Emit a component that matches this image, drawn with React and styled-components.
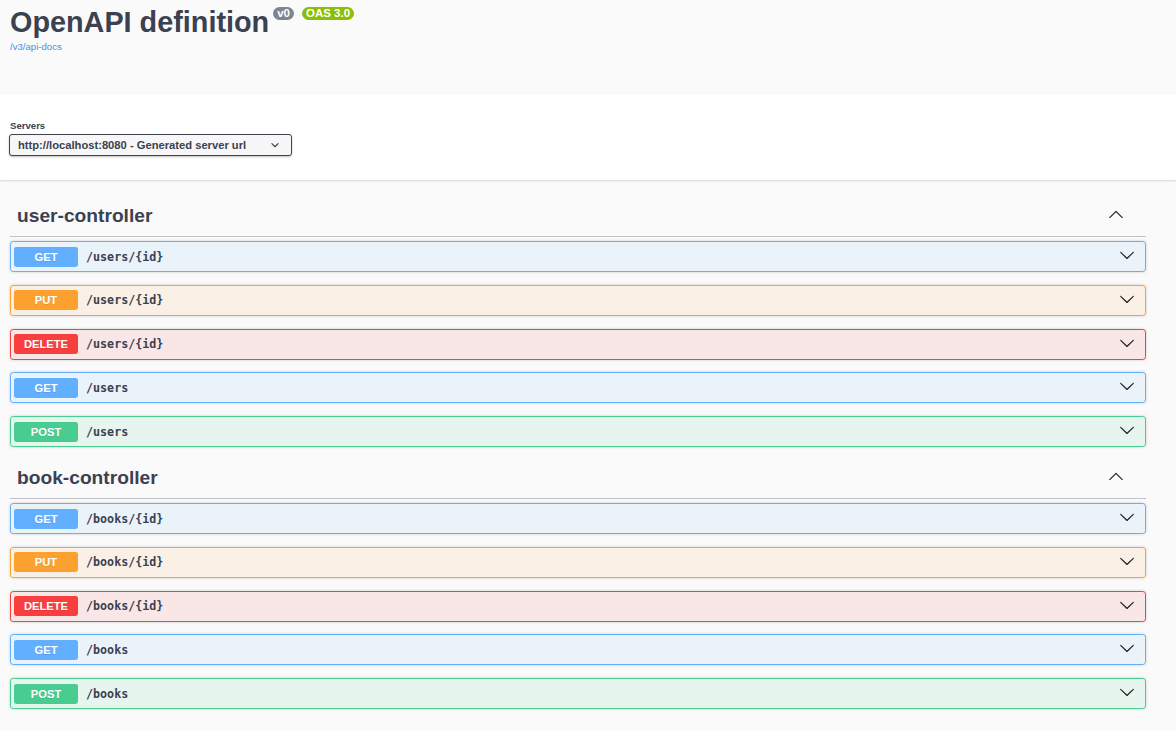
import React from 'react';
import styled, { createGlobalStyle } from 'styled-components';

const GlobalStyle = createGlobalStyle`
  body {
    margin: 0;
    background: #fafafa;
    font-family: "Liberation Sans", Arial, sans-serif;
    color: #3b4151;
  }
`;

const METHOD_COLORS = {
  GET: '#61affe',
  PUT: '#fca130',
  DELETE: '#f93e3e',
  POST: '#49cc90',
};

const Info = styled.div`
  height: 94px;
  box-sizing: border-box;
  padding: 0 10px;
`;

const TitleRow = styled.div`
  display: flex;
  align-items: flex-start;
`;

const Title = styled.h2`
  margin: 0;
  padding-top: 6px;
  font-size: 28.8px;
  line-height: 33px;
  font-weight: 700;
  color: #3b4151;
`;

const Badges = styled.div`
  display: flex;
  gap: 8px;
  margin: 7px 0 0 4px;
`;

const Badge = styled.span`
  background: ${p => p.color};
  color: #fff;
  font-size: 11.5px;
  font-weight: 700;
  line-height: 13px;
  padding: 0 4px;
  border-radius: 57px;
`;

const DocsLink = styled.a`
  display: block;
  margin-top: 2px;
  font-size: 9.6px;
  line-height: 11px;
  color: #4990e2;
  text-decoration: none;
`;

const SchemeContainer = styled.div`
  background: #fff;
  box-shadow: 0 1px 2px 0 rgba(0, 0, 0, 0.15);
  padding: 24px 10px;
  margin-bottom: 16px;
`;

const ServersLabel = styled.div`
  padding-top: 2px;
  font-size: 9.6px;
  line-height: 12px;
  font-weight: 700;
  color: #3b4151;
`;

const ServerSelect = styled.div`
  margin: 2px 0 0 -1px;
  width: 283px;
  height: 22px;
  box-sizing: border-box;
  display: flex;
  align-items: center;
  justify-content: space-between;
  padding: 0 8px;
  border: 1px solid #41444e;
  border-radius: 3px;
  background: #f7f7f7;
  box-shadow: 0 1px 2px 0 rgba(0, 0, 0, 0.25);
  font-size: 11.2px;
  font-weight: 700;
  color: #3b4151;

  svg {
    flex-shrink: 0;
  }
`;

const Wrapper = styled.div`
  padding: 0 30px 0 10px;
`;

const TagSection = styled.section`
  padding-bottom: 11px;
`;

const TagHeader = styled.div`
  height: 40px;
  display: flex;
  align-items: center;
  justify-content: space-between;
  padding: 0 22px 0 7px;
  border-bottom: 1px solid rgba(59, 65, 81, 0.3);

  svg {
    margin-bottom: 4px;
  }
`;

const TagName = styled.h3`
  margin: 0;
  font-size: 19.2px;
  line-height: 22px;
  font-weight: 700;
  color: #3b4151;
`;

const OpList = styled.div`
  display: flex;
  flex-direction: column;
  gap: 12.75px;
  margin-top: 4px;
`;

const OpBlock = styled.div`
  height: 31px;
  box-sizing: border-box;
  display: flex;
  align-items: center;
  padding: 0 10px 0 3px;
  border: 1px solid ${p => p.color};
  border-radius: 3.2px;
  background: ${p => p.color}1a;
  box-shadow: 0 0 3px rgba(0, 0, 0, 0.19);

  svg {
    margin-left: auto;
    margin-bottom: 3px;
  }
`;

const Method = styled.span`
  width: 64px;
  height: 20px;
  display: flex;
  align-items: center;
  justify-content: center;
  background: ${p => p.color};
  border-radius: 2.4px;
  color: #fff;
  font-size: 11.2px;
  font-weight: 700;
  text-shadow: 0 1px 0 rgba(0, 0, 0, 0.1);
`;

const Path = styled.span`
  padding: 0 8px;
  font-family: "DejaVu Sans Mono", "Liberation Mono", monospace;
  font-size: 11.7px;
  font-weight: 600;
  color: #3b4151;
`;

const ChevronDown = ({ size = 16 }) => (
  <svg width={size} height={size} viewBox="0 0 20 20" fill="#222">
    <path d="M17.418 6.109c.272-.268.709-.268.979 0s.271.701 0 .969l-7.908 7.83c-.27.268-.707.268-.979 0l-7.908-7.83c-.27-.268-.27-.701 0-.969.271-.268.709-.268.979 0L10 13.25l7.418-7.141z" />
  </svg>
);

const ChevronUp = () => (
  <svg width="16" height="16" viewBox="0 0 20 20" fill="#222">
    <path d="M17.418 14.908c.272.268.709.268.979 0s.271-.701 0-.969l-7.908-7.83c-.27-.268-.707-.268-.979 0l-7.908 7.83c-.27.268-.27.701 0 .969.271.268.709.268.979 0L10 7.767l7.418 7.141z" />
  </svg>
);

const SmallArrow = () => (
  <svg width="16" height="16" viewBox="0 0 20 20" fill="#3b4151">
    <path d="M13.418 7.859a.695.695 0 01.978 0 .68.68 0 010 .969l-3.908 3.83a.697.697 0 01-.979 0l-3.908-3.83a.68.68 0 010-.969.695.695 0 01.978 0L10 11l3.418-3.141z" />
  </svg>
);

const tags = [
  {
    name: 'user-controller',
    ops: [
      ['GET', '/users/{id}'],
      ['PUT', '/users/{id}'],
      ['DELETE', '/users/{id}'],
      ['GET', '/users'],
      ['POST', '/users'],
    ],
  },
  {
    name: 'book-controller',
    ops: [
      ['GET', '/books/{id}'],
      ['PUT', '/books/{id}'],
      ['DELETE', '/books/{id}'],
      ['GET', '/books'],
      ['POST', '/books'],
    ],
  },
];

export default function App() {
  return (
    <>
      <GlobalStyle />
      <Info>
        <TitleRow>
          <Title>OpenAPI definition</Title>
          <Badges>
            <Badge color="#7d8492">v0</Badge>
            <Badge color="#89bf04">OAS 3.0</Badge>
          </Badges>
        </TitleRow>
        <DocsLink href="#">/v3/api-docs</DocsLink>
      </Info>

      <SchemeContainer>
        <ServersLabel>Servers</ServersLabel>
        <ServerSelect>
          <span>http://localhost:8080 - Generated server url</span>
          <SmallArrow />
        </ServerSelect>
      </SchemeContainer>

      <Wrapper>
        {tags.map(tag => (
          <TagSection key={tag.name}>
            <TagHeader>
              <TagName>{tag.name}</TagName>
              <ChevronUp />
            </TagHeader>
            <OpList>
              {tag.ops.map(([method, path]) => (
                <OpBlock key={method + path} color={METHOD_COLORS[method]}>
                  <Method color={METHOD_COLORS[method]}>{method}</Method>
                  <Path>{path}</Path>
                  <ChevronDown />
                </OpBlock>
              ))}
            </OpList>
          </TagSection>
        ))}
      </Wrapper>
    </>
  );
}
